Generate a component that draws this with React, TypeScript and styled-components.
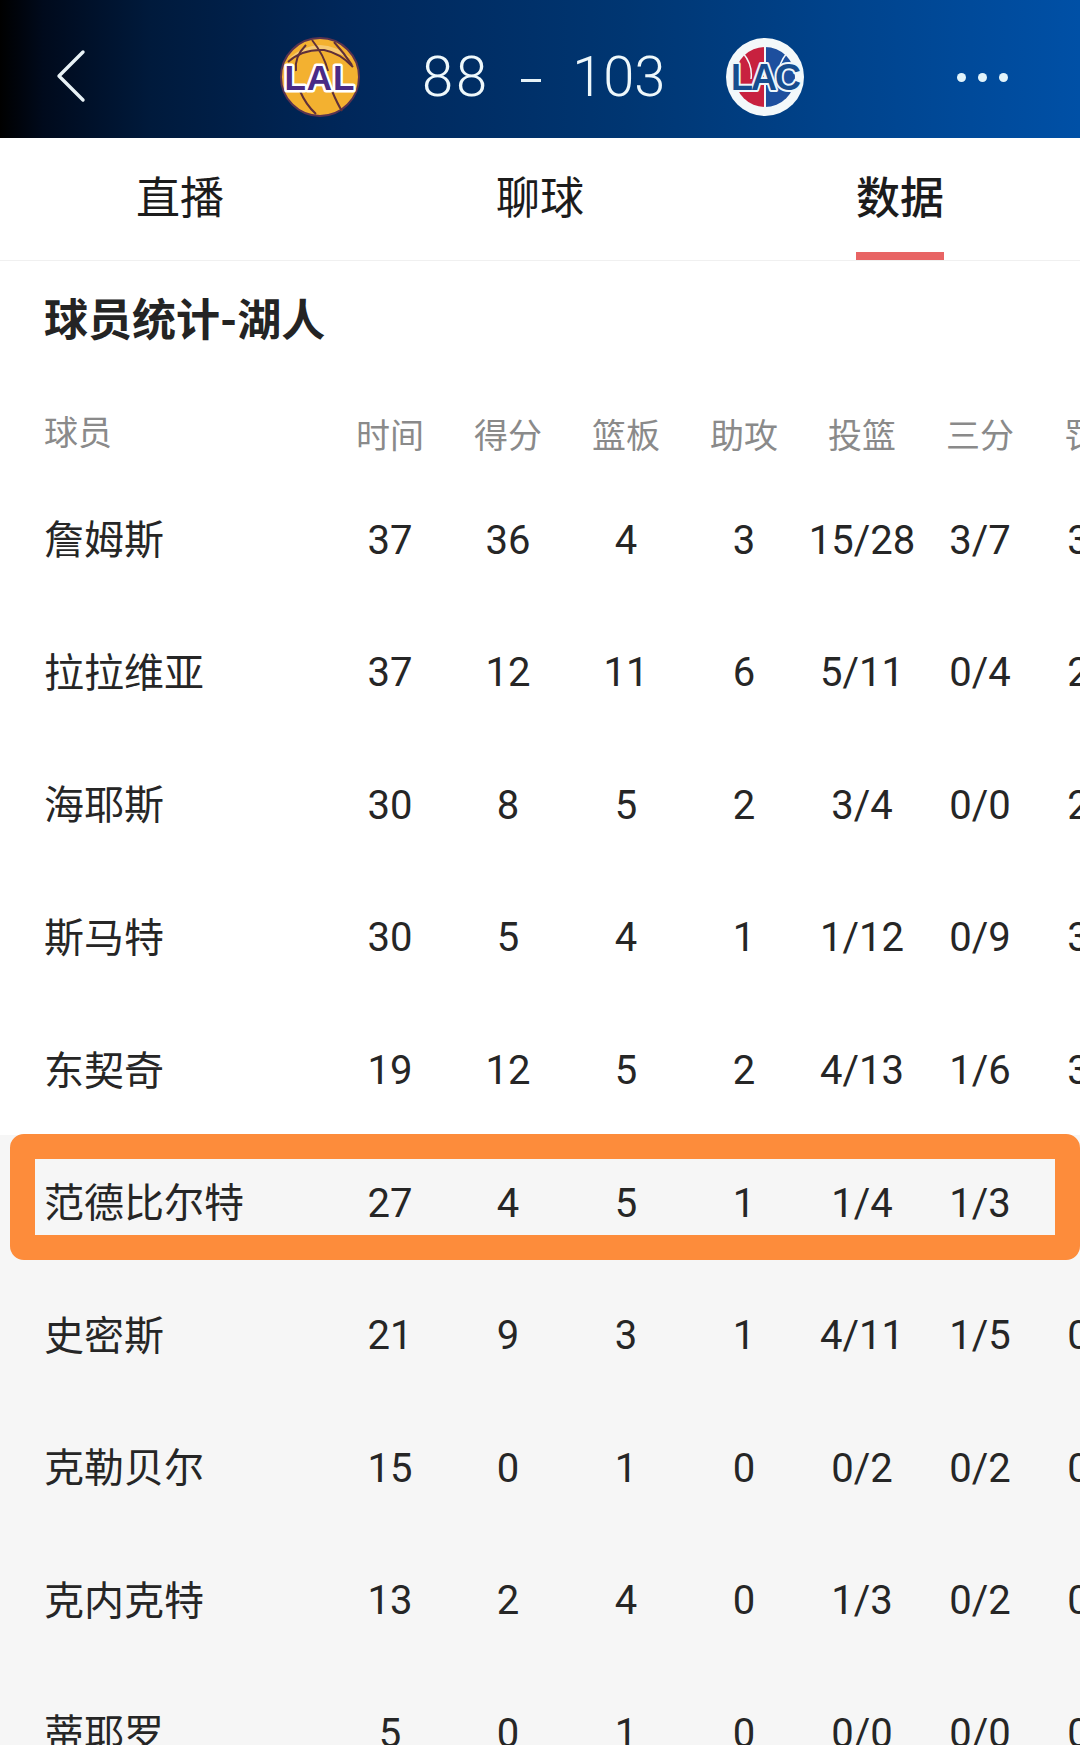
import React from "react";
import styled, { createGlobalStyle } from "styled-components";

const Global = createGlobalStyle`
  html, body { margin: 0; padding: 0; background: #fff; }
  #root { width: 1080px; height: 1745px; overflow: hidden; }
`;

const Page = styled.div`
  width: 1080px;
  height: 1745px;
  overflow: hidden;
  background: #fff;
  font-family: Roboto, "Noto Sans CJK SC", sans-serif;
  color: #222;
`;

const Header = styled.header`
  height: 138px;
  display: flex;
  align-items: center;
  padding: 16px 0 0 56px;
  box-sizing: border-box;
  background: linear-gradient(90deg, #000 0%, #000a1c 4%, #001a3c 14%, #00275a 32%, #003672 58%, #00438c 78%, #0050a6 100%);
`;

const BackIcon = styled.svg`
  width: 30px;
  height: 56px;
  flex: none;
`;

const ScoreBoard = styled.div`
  display: flex;
  align-items: center;
  margin-left: 192px;
`;

const Logo = styled.svg`
  width: 84px;
  height: 84px;
  flex: none;
  display: block;
`;

const LogoText = styled.text`
  font-family: "Liberation Sans", sans-serif;
  font-weight: 700;
  paint-order: stroke;
  stroke-linejoin: round;
`;

const Score = styled.div`
  margin: 0 58px 0 60px;
  display: flex;
  align-items: center;
  font-size: 56px;
  font-weight: 300;
  line-height: 1;
  color: #eef8fb;
`;

const ScoreValue = styled.span<{ $tracking?: number }>`
  letter-spacing: ${(p) => p.$tracking ?? 0}px;
`;

const ScoreDash = styled.span`
  width: 20px;
  height: 3px;
  margin: 6px 31px 0 31px;
  background: #e6f2f7;
`;

const Dots = styled.div`
  display: flex;
  gap: 12px;
  margin-left: 150px;
`;

const Dot = styled.span`
  width: 9px;
  height: 9px;
  border-radius: 50%;
  background: #e2f4fb;
`;

const Tabs = styled.nav`
  height: 123px;
  display: grid;
  grid-template-columns: repeat(3, 360px);
  border-bottom: 1px solid #f0f0f0;
  box-sizing: border-box;
`;

const Tab = styled.div`
  display: flex;
  justify-content: center;
`;

const TabLabel = styled.span<{ $active?: boolean }>`
  height: 122px;
  box-sizing: border-box;
  padding-top: 30px;
  font-size: 44px;
  line-height: 62px;
  font-weight: ${(p) => (p.$active ? 500 : 400)};
  color: #1c1c1c;
  border-bottom: 8px solid ${(p) => (p.$active ? "#e86464" : "transparent")};
`;

const Title = styled.h2`
  margin: 0;
  padding: 37px 0 52px 44px;
  height: 47px;
  font-size: 44px;
  line-height: 47px;
  font-weight: 700;
  color: #242424;
`;

const Row = styled.div<{ $grey?: boolean; $head?: boolean }>`
  position: relative;
  width: 1080px;
  height: ${(p) => (p.$head ? "75.4px" : "132.6px")};
  box-sizing: border-box;
  padding-bottom: ${(p) => (p.$head ? "5px" : "0")};
  display: grid;
  grid-template-columns: 331px repeat(7, 118px);
  align-items: center;
  background: ${(p) => (p.$grey ? "#f6f6f6" : "transparent")};
  font-size: ${(p) => (p.$head ? "34px" : "40px")};
  color: ${(p) => (p.$head ? "#8a8a8a" : "#262626")};
`;

const NameCell = styled.div`
  padding: 0 0 3px 44px;
  white-space: nowrap;
`;

const Cell = styled.div`
  padding-top: 3px;
  text-align: center;
  white-space: nowrap;
`;

const Highlight = styled.div`
  position: absolute;
  top: -1px;
  left: 10px;
  right: 0;
  height: 126px;
  box-sizing: border-box;
  border: 25px solid #fd8c3b;
  border-radius: 14px;
`;

const columns = ["时间", "得分", "篮板", "助攻", "投篮", "三分", "罚球"];

const players: { name: string; stats: string[] }[] = [
  { name: "詹姆斯", stats: ["37", "36", "4", "3", "15/28", "3/7", "3/4"] },
  { name: "拉拉维亚", stats: ["37", "12", "11", "6", "5/11", "0/4", "2/3"] },
  { name: "海耶斯", stats: ["30", "8", "5", "2", "3/4", "0/0", "2/2"] },
  { name: "斯马特", stats: ["30", "5", "4", "1", "1/12", "0/9", "3/4"] },
  { name: "东契奇", stats: ["19", "12", "5", "2", "4/13", "1/6", "3/3"] },
  { name: "范德比尔特", stats: ["27", "4", "5", "1", "1/4", "1/3", "1/2"] },
  { name: "史密斯", stats: ["21", "9", "3", "1", "4/11", "1/5", "0/0"] },
  { name: "克勒贝尔", stats: ["15", "0", "1", "0", "0/2", "0/2", "0/0"] },
  { name: "克内克特", stats: ["13", "2", "4", "0", "1/3", "0/2", "0/0"] },
  { name: "蒂耶罗", stats: ["5", "0", "1", "0", "0/0", "0/0", "0/0"] },
];

const LakersLogo = () => (
  <Logo viewBox="0 0 84 84">
    <circle cx="42" cy="42" r="39" fill="#f3b130" stroke="#5a3350" strokeWidth="2" />
    <path d="M10 24 Q42 -4 74 24 Q42 8 10 24 Z" fill="#f6cf83" opacity="0.8" />
    <g fill="none" stroke="#5e2f3a" strokeWidth="2">
      <path d="M10 27 Q24 14 46 15 Q62 18 75 32" />
      <path d="M34 5 Q46 20 50 36" />
      <path d="M28 10 Q16 22 18 36" />
      <path d="M56 7 Q66 18 74 30" />
      <path d="M22 56 Q28 70 38 79" />
      <path d="M54 56 Q60 70 64 76" />
    </g>
    <LogoText x="42" y="55" textAnchor="middle" fontSize="35" letterSpacing="1" fill="#4a2a86" stroke="#fff" strokeWidth="5">
      LAL
    </LogoText>
  </Logo>
);

const ClippersLogo = () => (
  <Logo viewBox="0 0 84 84">
    <circle cx="42" cy="42" r="39" fill="#f3f8fa" />
    <path d="M42 12 A30 30 0 0 0 42 72 Z" fill="#c8213f" />
    <path d="M42 12 A30 30 0 0 1 42 72 Z" fill="#1d4f9e" />
    <path d="M42 12 V72" stroke="#f3f8fa" strokeWidth="2" />
    <path d="M20 18 Q30 30 28 44 M64 18 Q54 30 56 44" fill="none" stroke="#f3f8fa" strokeWidth="1.5" />
    <LogoText x="42" y="55" textAnchor="middle" fontSize="36" letterSpacing="-2" fill="#164d8e" stroke="#eef7fb" strokeWidth="4">
      LAC
    </LogoText>
  </Logo>
);

export default function App() {
  return (
    <Page>
      <Global />
      <Header>
        <BackIcon viewBox="0 0 30 56" fill="none">
          <path d="M27 3 L3 27 L27 51" stroke="#e8f2f6" strokeWidth="3.4" strokeLinecap="round" strokeLinejoin="round" />
        </BackIcon>
        <ScoreBoard>
          <LakersLogo />
          <Score>
            <ScoreValue $tracking={3}>88</ScoreValue>
            <ScoreDash />
            <ScoreValue>103</ScoreValue>
          </Score>
          <ClippersLogo />
        </ScoreBoard>
        <Dots>
          <Dot />
          <Dot />
          <Dot />
        </Dots>
      </Header>
      <Tabs>
        <Tab><TabLabel>直播</TabLabel></Tab>
        <Tab><TabLabel>聊球</TabLabel></Tab>
        <Tab><TabLabel $active>数据</TabLabel></Tab>
      </Tabs>
      <Title>球员统计-湖人</Title>
      <Row $head>
        <NameCell>球员</NameCell>
        {columns.map((c) => (
          <Cell key={c}>{c}</Cell>
        ))}
      </Row>
      {players.map((p, i) => (
        <Row key={p.name} $grey={i >= 5}>
          <NameCell>{p.name}</NameCell>
          {p.stats.map((s, j) => (
            <Cell key={j}>{s}</Cell>
          ))}
          {i === 5 && <Highlight />}
        </Row>
      ))}
    </Page>
  );
}
